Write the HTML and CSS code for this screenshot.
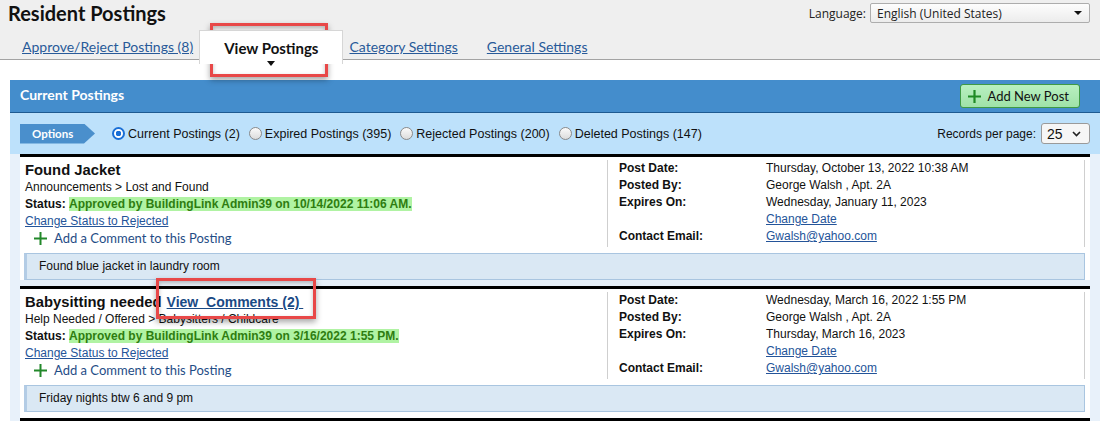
FILE: index.html
```html
<!DOCTYPE html>
<html lang="en">
<head>
  <meta charset="UTF-8">
  <title>Resident Postings</title>
  <link rel="stylesheet" href="styles.css">
</head>
<body>

<div class="page-head">
  <div class="title-row">
    <h1>Resident Postings</h1>
    <div class="lang">
      <span>Language:</span>
      <div class="lang-select">
        <span>English (United States)</span>
        <span class="tri"></span>
      </div>
    </div>
  </div>
  <nav class="tabs">
    <a class="tab" href="#">Approve/Reject Postings (8)</a>
    <span class="tab active">View Postings<span class="caret"></span></span>
    <a class="tab" href="#">Category Settings</a>
    <a class="tab tab-last" href="#">General Settings</a>
  </nav>
</div>

<div class="content">
  <div class="panel">
    <div class="panel-head">
      <h2>Current Postings</h2>
      <button class="btn-add">
        <svg width="15" height="15" viewBox="0 0 15 15"><path d="M7.5 1v13M1 7.5h13" stroke="#1f8a25" stroke-width="2.2" fill="none"/></svg>
        Add New Post
      </button>
    </div>

    <div class="options-bar">
      <div class="opt-tag">Options</div>
      <label class="radio-item first"><span class="radio checked"></span>Current Postings (2)</label>
      <label class="radio-item"><span class="radio"></span>Expired Postings (395)</label>
      <label class="radio-item"><span class="radio"></span>Rejected Postings (200)</label>
      <label class="radio-item"><span class="radio"></span>Deleted Postings (147)</label>
      <div class="per-page">
        <span>Records per page:</span>
        <div class="per-select">
          <span>25</span>
          <svg width="9" height="6" viewBox="0 0 9 6"><path d="M1 1l3.5 3.5L8 1" stroke="#222" stroke-width="1.6" fill="none"/></svg>
        </div>
      </div>
    </div>

    <div class="postings">
      <div class="posting">
        <div class="post-main">
          <div class="post-left">
            <div class="post-title">Found Jacket</div>
            <div>Announcements &gt; Lost and Found</div>
            <div><b>Status:</b> <span class="approved">Approved by BuildingLink Admin39 on 10/14/2022 11:06 AM.</span></div>
            <div><a href="#" class="link">Change Status to Rejected</a></div>
            <div class="add-comment">
              <svg width="13" height="13" viewBox="0 0 13 13"><path d="M6.5 0v13M0 6.5h13" stroke="#22882a" stroke-width="2" fill="none"/></svg>
              <a href="#">Add a Comment to this Posting</a>
            </div>
          </div>
          <div class="post-right">
            <div class="meta">
              <b>Post Date:</b><span>Thursday, October 13, 2022 10:38 AM</span>
              <b>Posted By:</b><span>George Walsh , Apt. 2A</span>
              <b>Expires On:</b><span>Wednesday, January 11, 2023</span>
              <b></b><span><a href="#" class="link">Change Date</a></span>
              <b>Contact Email:</b><span><a href="#" class="link">Gwalsh@yahoo.com</a></span>
            </div>
          </div>
        </div>
        <div class="post-desc">Found blue jacket in laundry room</div>
      </div>

      <div class="posting">
        <div class="post-main">
          <div class="post-left">
            <div class="post-title">Babysitting needed <a href="#" class="view-comments">View&nbsp; Comments (2)&nbsp;</a></div>
            <div>Help Needed / Offered &gt; Babysitters / Childcare</div>
            <div><b>Status:</b> <span class="approved">Approved by BuildingLink Admin39 on 3/16/2022 1:55 PM.</span></div>
            <div><a href="#" class="link">Change Status to Rejected</a></div>
            <div class="add-comment">
              <svg width="13" height="13" viewBox="0 0 13 13"><path d="M6.5 0v13M0 6.5h13" stroke="#22882a" stroke-width="2" fill="none"/></svg>
              <a href="#">Add a Comment to this Posting</a>
            </div>
          </div>
          <div class="post-right">
            <div class="meta">
              <b>Post Date:</b><span>Wednesday, March 16, 2022 1:55 PM</span>
              <b>Posted By:</b><span>George Walsh , Apt. 2A</span>
              <b>Expires On:</b><span>Thursday, March 16, 2023</span>
              <b></b><span><a href="#" class="link">Change Date</a></span>
              <b>Contact Email:</b><span><a href="#" class="link">Gwalsh@yahoo.com</a></span>
            </div>
          </div>
        </div>
        <div class="post-desc">Friday nights btw 6 and 9 pm</div>
      </div>
    </div>
  </div>
</div>

<!-- red highlight boxes drawn over the page -->
<div class="callout callout-tab"></div>
<div class="callout callout-comments"></div>

</body>
</html>
```

FILE: styles.css
```css
body {
  margin: 0;
  background: #fff;
  font-family: "Liberation Sans", Arial, sans-serif;
  font-size: 12px;
  color: #111;
}

a {
  color: #245499;
}

/* top area */
.page-head {
  background: #efefef;
}

.title-row {
  display: flex;
  justify-content: space-between;
  align-items: flex-start;
  height: 28px;
  padding: 0 10px 0 8px;
}

h1 {
  margin: 0;
  font-family: Lato, sans-serif;
  font-size: 20px;
  font-weight: bold;
  line-height: 26px;
  color: #111;
}

.lang {
  display: flex;
  align-items: center;
  gap: 4px;
  margin-top: 3px;
  font-family: "Open Sans", sans-serif;
  font-size: 12px;
  color: #222;
}

.lang-select {
  width: 220px;
  height: 20px;
  box-sizing: border-box;
  border: 1px solid #adadad;
  border-radius: 2px;
  background: linear-gradient(#fdfdfd, #ececec);
  padding: 0 7px 0 6px;
  display: flex;
  align-items: center;
  justify-content: space-between;
}

.tri {
  width: 0;
  height: 0;
  border-left: 4px solid transparent;
  border-right: 4px solid transparent;
  border-top: 4px solid #111;
}

.tabs {
  display: flex;
  align-items: flex-end;
  height: 31px;
  border-bottom: 1px solid #a3a3a3;
  padding-left: 16px;
  font-family: Lato, sans-serif;
  font-size: 14px;
}

.tab {
  padding: 0 6px;
  line-height: 20px;
  margin-bottom: 2px;
  color: #285a99;
}

.tab.active {
  position: relative;
  z-index: 1;
  display: flex;
  flex-direction: column;
  align-items: center;
  height: 34px;
  box-sizing: border-box;
  margin-bottom: -5px;
  padding: 7px 24px 0;
  background: #fff;
  border: 1px solid #d6d6d6;
  border-bottom: none;
  color: #111;
  font-size: 15px;
  font-weight: bold;
}

.caret {
  margin-top: 3px;
  width: 0;
  height: 0;
  border-left: 4px solid transparent;
  border-right: 4px solid transparent;
  border-top: 5px solid #111;
}

.tab-last {
  margin-left: 17px;
}

/* panel */
.content {
  padding: 20px 0 0 10px;
}

.panel {
  background: #e8f1fa;
}

.panel-head {
  height: 32px;
  background: #448dcc;
  border-bottom: 1px solid #1d5a91;
  display: flex;
  align-items: center;
  justify-content: space-between;
  padding: 0 20px 0 10px;
}

h2 {
  margin: 0 0 3px;
  color: #fff;
  font-family: Lato, sans-serif;
  font-size: 14px;
  font-weight: bold;
}

.btn-add {
  height: 24px;
  display: flex;
  align-items: center;
  gap: 6px;
  padding: 0 10px 0 6px;
  background: linear-gradient(#b8f0c0, #9fe2a8);
  border: 1px solid #3f9a45;
  border-radius: 3px;
  font-family: Lato, sans-serif;
  font-size: 13px;
  color: #111;
}

.options-bar {
  height: 41px;
  background: #bde1fb;
  display: flex;
  align-items: center;
  padding: 0 10px;
}

.opt-tag {
  width: 75px;
  height: 20px;
  box-sizing: border-box;
  padding-left: 12px;
  background: #4a8fcc;
  clip-path: polygon(0 0, 64px 0, 75px 50%, 64px 100%, 0 100%);
  color: #fff;
  font-family: Lato, sans-serif;
  font-size: 11.5px;
  font-weight: bold;
  line-height: 20px;
}

.radio-item {
  display: flex;
  align-items: center;
  gap: 3px;
  margin-right: 9px;
  font-size: 12.5px;
  color: #111;
}

.radio-item.first {
  margin-left: 17px;
}

.radio {
  width: 13px;
  height: 13px;
  box-sizing: border-box;
  border-radius: 50%;
  border: 1px solid #8a8a8a;
  background: linear-gradient(#fafafa, #dcdcdc);
}

.radio.checked {
  border: 2px solid #1a6fd6;
  background: radial-gradient(circle, #1a6fd6 0 2.6px, #fff 3px);
}

.per-page {
  margin-left: auto;
  display: flex;
  align-items: center;
  gap: 5px;
}

.per-select {
  width: 49px;
  height: 21px;
  box-sizing: border-box;
  border: 1px solid #9a9a9a;
  border-radius: 3px;
  background: #f6f6f6;
  display: flex;
  align-items: center;
  justify-content: space-between;
  padding: 0 8px 0 5px;
  font-size: 14px;
}

/* postings */
.postings {
  padding: 0 10px;
}

.posting {
  background: #fff;
  border-top: 3px solid #000;
}

.posting:last-child {
  border-bottom: 3px solid #000;
}

.post-main {
  display: flex;
  align-items: flex-start;
  padding: 5px 5px 0 5px;
}

.post-left {
  flex: 1;
  line-height: 17px;
}

.post-title {
  font-size: 14.8px;
  font-weight: bold;
}

.view-comments {
  margin-left: 1px;
  font-size: 14px;
  color: #1a4a85;
  background: #fff;
}

.approved {
  background: #b0f3a3;
  color: #2e7d10;
  font-weight: bold;
}

.link {
  color: #245499;
}

.add-comment {
  display: flex;
  align-items: center;
  gap: 7px;
  padding-left: 9px;
  font-family: Lato, sans-serif;
  font-size: 13px;
}

.add-comment a {
  text-decoration: none;
  color: #1f4d86;
}

.post-right {
  width: 478px;
  box-sizing: border-box;
  margin-top: -2px;
  padding: 0 0 2px 11px;
  border-left: 1px solid #cfcfcf;
  border-right: 1px solid #cfcfcf;
}

.meta {
  display: grid;
  grid-template-columns: 147px 1fr;
  line-height: 17px;
}

.post-desc {
  margin: 6px 5px 6px 4px;
  height: 25px;
  line-height: 25px;
  padding-left: 12px;
  background: #dae8f4;
  border: 1px solid #a9c5e0;
  border-left: 3px solid #b3cce5;
}

/* red highlight boxes */
.callout {
  position: absolute;
  box-sizing: border-box;
  border: 3px solid #e84848;
  box-shadow: 0 3px 6px rgba(0, 0, 0, 0.35), inset 0 2px 4px rgba(0, 0, 0, 0.25);
  pointer-events: none;
}

.callout-tab {
  left: 210px;
  top: 23px;
  width: 118px;
  height: 54px;
}

.callout-comments {
  left: 156px;
  top: 278px;
  width: 160px;
  height: 41px;
}
```
